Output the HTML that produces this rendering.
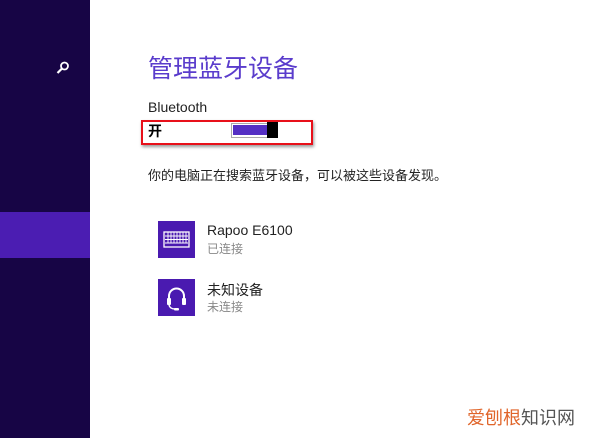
<html><head><style>
body{margin:0;width:600px;height:438px;background:#fff;position:relative;overflow:hidden;font-family:"Liberation Sans","Noto Sans CJK SC",sans-serif}
.a{position:absolute}
</style></head><body>
<div class="a" style="left:0;top:0;width:90px;height:438px;background:#170545"></div>
<div class="a" style="left:0;top:212px;width:90px;height:46px;background:#4b1db2"></div>
<svg class="a" style="left:55px;top:60px" width="16" height="16" viewBox="0 0 16 16"><circle cx="9.5" cy="6" r="3.5" fill="none" stroke="#fff" stroke-width="1.8"/><line x1="7" y1="8.5" x2="2.5" y2="13" stroke="#fff" stroke-width="2.2"/></svg>
<div class="a" style="left:148px;top:50px;font-size:25px;color:#5a3ccc;font-family:'Noto Sans CJK SC',sans-serif;line-height:34px">管理蓝牙设备</div>
<div class="a" style="left:148px;top:99px;font-size:14px;color:#222">Bluetooth</div>
<div class="a" style="left:141px;top:120px;width:168px;height:21px;border:2px solid #e8101a;box-shadow:1px 2px 3px rgba(0,0,0,.4)"></div>
<div class="a" style="left:148px;top:121px;font-size:14px;color:#000;font-weight:bold;font-family:'Noto Sans CJK SC',sans-serif">开</div>
<div class="a" style="left:231px;top:123px;width:44px;height:13px;border:1px solid #aaa;background:#fff"></div>
<div class="a" style="left:233px;top:125px;width:36px;height:10px;background:#5530c4"></div>
<div class="a" style="left:267px;top:122px;width:11px;height:16px;background:#000"></div>
<div class="a" style="left:148px;top:165px;font-size:13px;color:#222;font-family:'Noto Sans CJK SC',sans-serif">你的电脑正在搜索蓝牙设备，可以被这些设备发现。</div>
<div class="a" style="left:158px;top:221px;width:37px;height:37px;background:#4a1ab0"></div>
<svg class="a" style="left:158px;top:221px" width="37" height="37"><rect x="6" y="11" width="25" height="15" fill="none" stroke="#fff" stroke-width="1.3"/><g stroke="#fff" stroke-width=".9"><line x1="7" y1="15" x2="30" y2="15"/><line x1="7" y1="18.5" x2="30" y2="18.5"/><line x1="7" y1="22" x2="30" y2="22"/><line x1="10" y1="11" x2="10" y2="22"/><line x1="13" y1="11" x2="13" y2="22"/><line x1="16" y1="11" x2="16" y2="22"/><line x1="19" y1="11" x2="19" y2="22"/><line x1="22" y1="11" x2="22" y2="22"/><line x1="25" y1="11" x2="25" y2="22"/><line x1="28" y1="11" x2="28" y2="22"/></g></svg>
<div class="a" style="left:207px;top:222px;font-size:14px;color:#222">Rapoo E6100</div>
<div class="a" style="left:207px;top:240px;font-size:12px;color:#888;font-family:'Noto Sans CJK SC',sans-serif">已连接</div>
<div class="a" style="left:158px;top:279px;width:37px;height:37px;background:#4a1ab0"></div>
<svg class="a" style="left:158px;top:279px" width="37" height="37"><path d="M11 21 V17 A7.5 7.5 0 0 1 26 17 V21" fill="none" stroke="#fff" stroke-width="2"/><rect x="9" y="19" width="4" height="7" rx="1" fill="#fff"/><rect x="24" y="19" width="4" height="7" rx="1" fill="#fff"/><path d="M11 26 Q12 30 17 30" fill="none" stroke="#fff" stroke-width="1.5"/><rect x="16" y="29" width="5" height="2.5" rx="1" fill="#fff"/></svg>
<div class="a" style="left:207px;top:280px;font-size:14px;color:#222;font-family:'Noto Sans CJK SC',sans-serif">未知设备</div>
<div class="a" style="left:207px;top:298px;font-size:12px;color:#888;font-family:'Noto Sans CJK SC',sans-serif">未连接</div>
<div class="a" style="left:467px;top:404px;font-size:18px;font-family:'Noto Sans CJK SC',sans-serif;color:#555"><span style="color:#e0652a">爱刨根</span>知识网</div>
</body></html>
